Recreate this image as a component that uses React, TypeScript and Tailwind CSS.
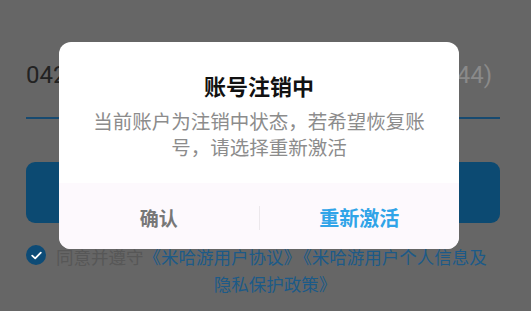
const CJK = "font-['Noto_Sans_CJK_SC','Noto_Sans',sans-serif]";

export default function App() {
  return (
    <div className={`relative w-[531px] h-[311px] overflow-hidden bg-[#666666] pl-[26px] pr-[31px] ${CJK}`}>
      {/* page behind the overlay */}
      <div className="flex items-center justify-between h-[30px] mt-[60px] pr-[8px]">
        <span className="text-[24px] leading-[30px] text-[#222] font-['Roboto',sans-serif]">042</span>
        <span className="text-[24px] leading-[30px] text-[#8a8a8a] font-['Roboto',sans-serif]">(+44)</span>
      </div>
      <div className="mt-[27px] h-[2px] bg-[#174a70]" />
      <div className="mt-[43px] h-[61px] rounded-[9px] bg-[#0c4a72]" />
      <div className="mt-[20px] flex items-start">
        <div className="mt-[2px] w-[20px] h-[20px] rounded-full bg-[#0d4b76] flex items-center justify-center shrink-0">
          <svg width="11" height="9" viewBox="0 0 11 9" fill="none">
            <path d="M1.2 4.6 L4.2 7.4 L9.8 1.6" stroke="#ffffff" strokeWidth="1.8" strokeLinecap="round" strokeLinejoin="round" />
          </svg>
        </div>
        <div className="ml-[10px] w-[438px] text-center text-[17.5px] leading-[27px]">
          <div className="text-left whitespace-nowrap">
            <span className="text-[#575757]">同意并遵守</span>
            <span className="text-[#1c5a88]">《米哈游用户协议》</span>
            <span className="ml-[2px] text-[#1c5a88]">《米哈游用户个人信息及</span>
          </div>
          <div className="text-[#1c5a88]">隐私保护政策》</div>
        </div>
      </div>

      {/* dialog */}
      <div className="absolute left-[59px] top-[42px] w-[400px] h-[207px] rounded-[12px] bg-white overflow-hidden flex flex-col">
        <div className="pt-[28px] text-center text-[22px] leading-[30px] font-bold text-[#111]">账号注销中</div>
        <div className="mt-[8px] px-[32px] text-center text-[19.5px] leading-[26px] text-[#8c8c8c]">
          当前账户为注销中状态，若希望恢复账号，请选择重新激活
        </div>
        <div className="flex-1" />
        <div className="h-[66px] bg-[#fdf9fd] flex items-center pt-[4px]">
          <div className="flex-1 text-center text-[19px] font-bold text-[#777777]">确认</div>
          <div className="w-px h-[24px] bg-[#ece8ec]" />
          <div className="flex-1 text-center text-[20px] font-bold text-[#30a4e8]">重新激活</div>
        </div>
      </div>
    </div>
  );
}
